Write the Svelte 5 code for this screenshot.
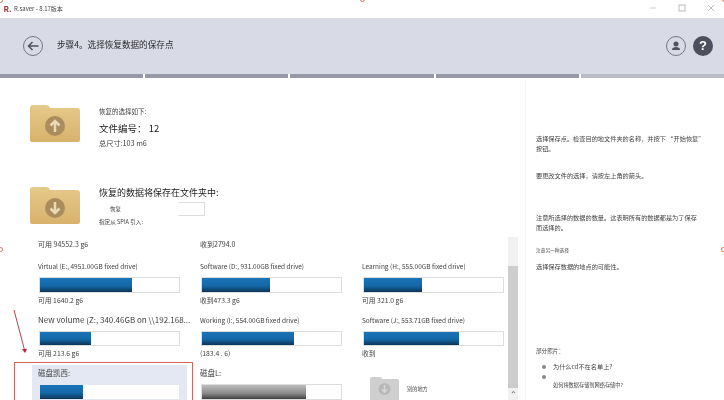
<script>
  const steps = [1, 1, 1, 1, 0];
  const drives = [
    { top: '可用 94552.3 g6', noBar: true },
    { top: '收到2794.0', noBar: true },
    { top: '', noBar: true },
    { label: 'Virtual (E:, 4951.00GB fixed drive)', fill: 66, sub: '可用 1640.2 g6' },
    { label: 'Software (D:, 931.00GB fixed drive)', fill: 48.6, sub: '收到473.3 g6' },
    { label: 'Learning (H:, 555.00GB fixed drive)', fill: 42, sub: '可用 321.0 g6' },
    { label: 'New volume (Z:, 340.46GB on \\\\192.168...', fill: 37, sub: '可用 213.6 g6', big: true },
    { label: 'Working (I:, 554.00GB fixed drive)', fill: 66, sub: '(183.4 . 6)' },
    { label: 'Software (J:, 553.71GB fixed drive)', fill: 68, sub: '收到' },
    { label: '磁盘凯西:', fill: 31, selected: true, cjk: true },
    { label: '磁盘L:', fill: 75, grey: true, cjk: true },
    { other: true, label: '别的地方' }
  ];
</script>

<div class="window">
  <div class="titlebar">
    <span class="logo">R.</span>
    <span class="apptitle">R.saver - 8.17版本</span>
    <div class="winbtns">
      <svg width="8" height="8" viewBox="0 0 8 8"><path d="M1 4h6" stroke="#ccc" fill="none" /></svg>
      <svg width="8" height="8" viewBox="0 0 8 8"><rect x="1" y="1" width="6" height="6" stroke="#bbb" fill="none" /></svg>
      <svg width="8" height="8" viewBox="0 0 8 8"><path d="M1 1l6 6M7 1l-6 6" stroke="#bbb" fill="none" /></svg>
    </div>
  </div>

  <header class="header">
    <svg class="back" width="20" height="20" viewBox="0 0 20 20">
      <circle cx="10" cy="10" r="9.500" fill="none" stroke="#73757f" />
      <path d="M15.500 10H5.500M9.500 6l-4 4 4 4" fill="none" stroke="#50525c" stroke-width="1.500" />
    </svg>
    <h1>步骤4。选择恢复数据的保存点</h1>
    <svg class="user" width="20" height="20" viewBox="0 0 20 20">
      <circle cx="10" cy="10" r="9.500" fill="none" stroke="#73757f" />
      <circle cx="10" cy="8" r="2.500" fill="#50525c" />
      <path d="M6 14c0-2.200 1.800-3 4-3s4 .8 4 3z" fill="#50525c" />
    </svg>
    <div class="help">?</div>
  </header>

  <div class="steps">
    {#each steps as s}
      <div class="step" class:done={s}></div>
    {/each}
  </div>

  <div class="main">
    <div class="left">
      <section class="summary first">
        <svg class="folder" width="50" height="39" viewBox="0 0 50 39">
          <defs>
            <linearGradient id="fg" x1="0" y1="0" x2="0" y2="1">
              <stop offset="0" stop-color="#e6c98a" />
              <stop offset="1" stop-color="#d8b26c" />
            </linearGradient>
          </defs>
          <path d="M0 4q0-3 3-3h13q3 0 4 3h27q3 0 3 3v29q0 2-2 2H2q-2 0-2-2z" fill="url(#fg)" />
          <circle cx="25" cy="22" r="10" fill="#a98d5d" />
          <path d="M25 28v-11M20.500 21.500l4.500-4.500 4.500 4.500" fill="none" stroke="#eadbb5" stroke-width="2.500" />
        </svg>
        <div class="info">
          <div class="tiny">恢复的选择如下:</div>
          <div class="count">文件编号： 12</div>
          <div class="small">总尺寸:103 m6</div>
        </div>
      </section>

      <section class="summary second">
        <svg class="folder" width="50" height="39" viewBox="0 0 50 39">
          <path d="M0 4q0-3 3-3h13q3 0 4 3h27q3 0 3 3v29q0 2-2 2H2q-2 0-2-2z" fill="url(#fg)" />
          <circle cx="25" cy="22" r="10" fill="#a98d5d" />
          <path d="M25 16v11M20.500 22.500l4.500 4.500 4.500-4.500" fill="none" stroke="#eadbb5" stroke-width="2.500" />
        </svg>
        <div class="info">
          <div class="dest">恢复的数据将保存在文件夹中:</div>
          <div class="field"><span>恢复</span></div>
          <div class="hint">指定从 SPIA 引入:</div>
        </div>
      </section>

      <div class="drivearea">
        <div class="drives">
          {#each drives as d}
            {#if d.noBar}
              <div class="drive head">{d.top}</div>
            {:else if d.other}
              <div class="drive other">
                <svg width="29" height="24" viewBox="0 0 29 24">
                  <path d="M0 3q0-2 2-2h8q2 0 2 2h15q2 0 2 2v19H0z" fill="#cfcfcf" />
                  <circle cx="14.500" cy="13" r="6" fill="#b8b8b8" />
                  <path d="M14.500 9v7M12 13.500l2.500 2.500 2.500-2.500" stroke="#d8d8d8" fill="none" stroke-width="1.500" />
                </svg>
                <span>{d.label}</span>
              </div>
            {:else}
              <div class="drive" class:selected={d.selected}>
                <div class="label" class:big={d.big} class:cjk={d.cjk}>{d.label}</div>
                <div class="bar"><div class="fill" class:grey={d.grey} style="width:{d.fill}%"></div></div>
                {#if d.sub}<div class="sub">{d.sub}</div>{/if}
              </div>
            {/if}
          {/each}
        </div>
        <div class="scrollbar"><div class="thumb"></div><div class="arrow">⌃</div></div>
      </div>
    </div>

    <aside class="right">
      <p class="p1">选择保存点。检查目的地文件夹的名称，并按下 “开始恢复” 按钮。</p>
      <p class="p2">要更改文件的选择，请按左上角的箭头。</p>
      <p class="p3">注意所选择的数据的数量。这表明所有的数据都是为了保存而选择的。</p>
      <p class="p4">注意另一种选择</p>
      <p class="p5">选择保存数据的地点的可能性。</p>
      <p class="p6">部分照片：</p>
      <ul>
        <li>为什么cd不在名单上?</li>
        <li class="low">如何将数据存储到网络存储中?</li>
      </ul>
    </aside>
  </div>

  <svg class="redarrow" width="16" height="48" viewBox="0 0 16 48">
    <path d="M1 1l10.500 40" stroke="#b5474a" fill="none" />
    <path d="M9 40l5 0-2 4z" fill="#b5272a" />
  </svg>
  <div class="highlight"></div>
  <i class="dot d1"></i><i class="dot d2"></i><i class="dot d3"></i><i class="dot d4"></i><i class="dot d5"></i>
</div>

<style>
  :global(body) { margin: 0; background: #fff; }
  .window {
    position: relative; width: 724px; height: 400px; overflow: hidden; background: #fff;
    font-family: "Noto Sans CJK SC", "Noto Sans", sans-serif; color: #3f3f3f;
    display: flex; flex-direction: column; filter: blur(0.3px);
  }
  .titlebar { height: 18px; display: flex; align-items: center; padding: 0 9px 2px 2px; box-sizing: border-box; flex: none; }
  .logo { color: #a33; font-size: 8px; font-weight: 700; width: 11px; text-align: center; margin-right: 1px; }
  .apptitle { font-size: 6px; color: #444; }
  .winbtns { margin-left: auto; display: flex; gap: 21px; }
  .header { height: 56px; background: #d8dae5; display: flex; align-items: center; padding: 0 11px 0 23px; flex: none; box-sizing: border-box; }
  .back { margin-right: 14px; }
  h1 { margin: 0 0 4px; font-size: 8.600px; font-weight: 400; color: #2a2a2e; }
  .user { margin-left: auto; margin-right: 7px; }
  .help { width: 20px; height: 20px; border-radius: 50%; background: #4d4f5c; color: #fff; font: 700 13px/20px "Liberation Sans", sans-serif; text-align: center; }
  .steps { display: flex; gap: 2px; height: 5px; background: #fff; flex: none; padding-bottom: 1px; box-sizing: border-box; }
  .step { flex: 1; background: #b9bbc6; }
  .step.done { background: #9899a8; }
  .main { flex: 1; display: flex; min-height: 0; }
  .left { width: 525px; flex: none; }
  .right { flex: 1; border-left: 1px solid #f7f7f7; padding-left: 10px; font-size: 6.200px; line-height: 10px; color: #444; }
  .summary { display: flex; padding-left: 30px; }
  .first { padding-top: 25px; height: 82px; box-sizing: border-box; }
  .second { padding-top: 25px; height: 78px; box-sizing: border-box; }
  .folder { margin-right: 19px; flex: none; }
  .info { margin-top: 2px; }
  .tiny { font-size: 6.500px; line-height: 10px; }
  .count { font-size: 9.500px; line-height: 14px; margin-top: 5px; color: #222; }
  .small { font-size: 7.200px; line-height: 10px; margin-top: 3px; }
  .dest { font-size: 9px; line-height: 14px; margin-top: -2px; color: #222; }
  .field { width: 104px; height: 12px; border: 1px solid; border-image: linear-gradient(to right, transparent 74%, #ddd 76%) 1; margin-top: 2px; font-size: 5.500px; line-height: 12px; }
  .field span { margin-left: 10px; }
  .hint { font-size: 5.600px; line-height: 10px; margin-top: 1px; }
  .drivearea { display: flex; height: 160px; }
  .drives { width: 471px; padding-left: 38px; display: grid; grid-template-columns: 162px 162px 147px; grid-template-rows: 18px 53.500px 53.500px 54px; align-content: start; }
  .drive { font-size: 6.800px; min-width: 0; }
  .drive.head { font-size: 7px; line-height: 12px; margin-top: -1px; }
  .label { font-size: 6.500px; line-height: 10px; height: 10px; margin-top: 4px; white-space: nowrap; }
  .label.big { font-size: 8px; }
  .label.cjk { font-size: 7.500px; }
  .bar { width: 141px; height: 15.500px; margin-top: 6px; margin-left: 1px; border: 1px solid #ddd; background: #fff; box-sizing: border-box; }
  .fill { height: 100%; background: linear-gradient(#1a74b8 0%, #1468a8 55%, #0c3558 100%); }
  .fill.grey { background: linear-gradient(#bdbdbd, #8a8a8a 60%, #3f3f3f); }
  .sub { line-height: 10px; margin-top: 2px; }
  .selected { background: #e4e8f2; margin: 1px 13px 0 -6px; padding-left: 6px; }
  .selected .label { margin-top: 3px; }
  .selected .bar { border-color: #e4e8f2; }
  .other { display: flex; align-items: center; gap: 8px; font-size: 5.200px; padding: 12px 0 0 8px; align-self: start; }
  .scrollbar { width: 10px; margin-left: -1px; margin-top: -2px; height: 163px; background: #f1f1f1; display: flex; flex-direction: column; flex: none; }
  .thumb { margin-top: 29px; height: 122px; background: #cdcdcd; }
  .arrow { font-size: 8px; text-align: center; line-height: 12px; color: #555; }
  p { margin: 0; }
  .p1 { width: 170px; margin-top: 55px; }
  .p2 { margin-top: 17px; }
  .p3 { width: 163px; margin-top: 32px; }
  .p4 { margin-top: 12px; font-size: 4.700px; }
  .p5 { margin-top: 7px; }
  .p6 { margin-top: 74px; font-size: 5.600px; }
  ul { margin: 6px 0 0; padding: 0 0 0 17px; list-style: none; }
  li { position: relative; line-height: 10px; }
  li::before { content: ""; position: absolute; left: -11px; top: 3px; width: 4px; height: 4px; border-radius: 50%; background: #8a8a8a; }
  li.low { font-size: 5.200px; margin-top: 7px; padding-top: 1px; }
  li.low::before { top: -4px; }
  .redarrow { position: absolute; left: 13px; top: 309px; }
  .highlight { position: absolute; left: 14px; top: 362px; width: 179px; height: 60px; border: 1px solid #d2665e; box-sizing: border-box; }
  .dot { position: absolute; width: 5px; height: 5px; border-radius: 50%; border: 1px solid #d9705c; background: #fff; box-sizing: border-box; }
  .d1 { left: -2px; top: -2px; } .d2 { left: 360px; top: -3px; } .d3 { left: 722px; top: -3px; }
  .d4 { left: -2px; top: 247px; } .d5 { left: 721px; top: 247px; }
</style>
